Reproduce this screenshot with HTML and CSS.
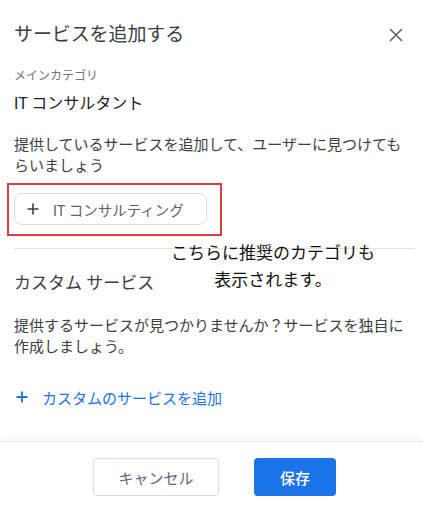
FILE: index.html
```html
<!DOCTYPE html>
<html lang="ja">
<head>
<meta charset="utf-8">
<link rel="stylesheet" href="styles.css">
</head>
<body>
<div class="dialog">
  <div class="header">
    <div class="title">サービスを追加する</div>
    <svg class="close" width="14" height="14" viewBox="0 0 14 14"><path d="M1 1L13 13M13 1L1 13" stroke="#5f6368" stroke-width="1.6" fill="none"/></svg>
  </div>
  <div class="label">メインカテゴリ</div>
  <div class="main-cat">IT コンサルタント</div>
  <p class="desc">提供しているサービスを追加して、ユーザーに見つけてもらいましょう</p>
  <div class="highlight">
    <div class="chip">
      <svg width="12" height="12" viewBox="0 0 12 12"><path d="M6 0.5V11.5M0.5 6H11.5" stroke="#3c4043" stroke-width="1.6" fill="none"/></svg>
      <span>IT コンサルティング</span>
    </div>
  </div>
  <div class="divider"></div>
  <div class="section-title">カスタム サービス</div>
  <p class="desc para">提供するサービスが見つかりませんか？サービスを独自に作成しましょう。</p>
  <div class="add-link">
    <svg width="12" height="12" viewBox="0 0 12 12"><path d="M6 0.5V11.5M0.5 6H11.5" stroke="#1a73e8" stroke-width="1.8" fill="none"/></svg>
    <span>カスタムのサービスを追加</span>
  </div>
  <div class="note">こちらに推奨のカテゴリも<br>表示されます。</div>
</div>
<div class="footer">
  <button class="btn cancel">キャンセル</button>
  <button class="btn save">保存</button>
</div>
</body>
</html>
```

FILE: styles.css
```css
* { box-sizing: border-box; }
body {
  margin: 0;
  background: #fff;
  font-family: Roboto, "Noto Sans CJK JP", sans-serif;
  color: #3c4043;
  width: 423px;
  height: 507px;
  overflow: hidden;
}
.dialog {
  position: relative;
  padding: 23px 8px 0 14px;
}
.header {
  display: flex;
  justify-content: space-between;
  align-items: center;
  height: 24px;
}
.title {
  font-size: 19px;
  line-height: 24px;
  color: #3c4043;
  letter-spacing: -0.1px;
}
.close { margin-right: 12px; }
.label {
  margin-top: 21px;
  font-size: 12px;
  line-height: 16px;
  color: #70757a;
}
.main-cat {
  margin-top: 9px;
  font-size: 16px;
  line-height: 22px;
  color: #202124;
}
.desc {
  margin: 20px 0 0;
  font-size: 15px;
  line-height: 21px;
  color: #3c4043;
  padding-right: 6px;
}
.highlight {
  margin-top: 6px;
  margin-left: -7px;
  width: 215px;
  height: 53px;
  border: 2px solid #d8403f;
  padding: 8px 0 0 5px;
}
.chip {
  display: flex;
  align-items: center;
  gap: 14px;
  width: 193px;
  height: 32px;
  border: 1px solid #dadce0;
  border-radius: 8px;
  padding-left: 12px;
  font-size: 14.5px;
  color: #5f6368;
}
.chip svg { flex: none; }
.divider {
  margin-top: 12px;
  height: 1px;
  background: #e3e3e3;
}
.section-title {
  margin-top: 22px;
  font-size: 17px;
  line-height: 24px;
  color: #3c4043;
}
.para { margin-top: 21px; }
.add-link {
  margin-top: 28px;
  display: flex;
  align-items: center;
  gap: 14px;
  padding-left: 2px;
  height: 22px;
  font-size: 15px;
  color: #1a73e8;
}
.note {
  position: absolute;
  left: 160px;
  top: 238px;
  width: 226px;
  text-align: center;
  font-family: "Noto Sans CJK JP", sans-serif;
  font-size: 17px;
  line-height: 27px;
  color: #111;
}
.footer {
  margin-top: 33px;
  border-top: 1px solid #ececec;
  box-shadow: 0 -3px 6px rgba(0,0,0,0.04);
  padding-top: 16px;
  display: flex;
  justify-content: center;
  gap: 35px;
  padding-left: 6px;
}
.btn {
  height: 38px;
  border-radius: 4px;
  font-family: Roboto, "Noto Sans CJK JP", sans-serif;
  font-size: 15px;
}
.cancel {
  width: 126px;
  background: #fff;
  border: 1px solid #dadce0;
  color: #5a6a7e;
}
.save {
  width: 82px;
  background: #1a73e8;
  border: none;
  color: #fff;
  font-weight: 500;
}
```
